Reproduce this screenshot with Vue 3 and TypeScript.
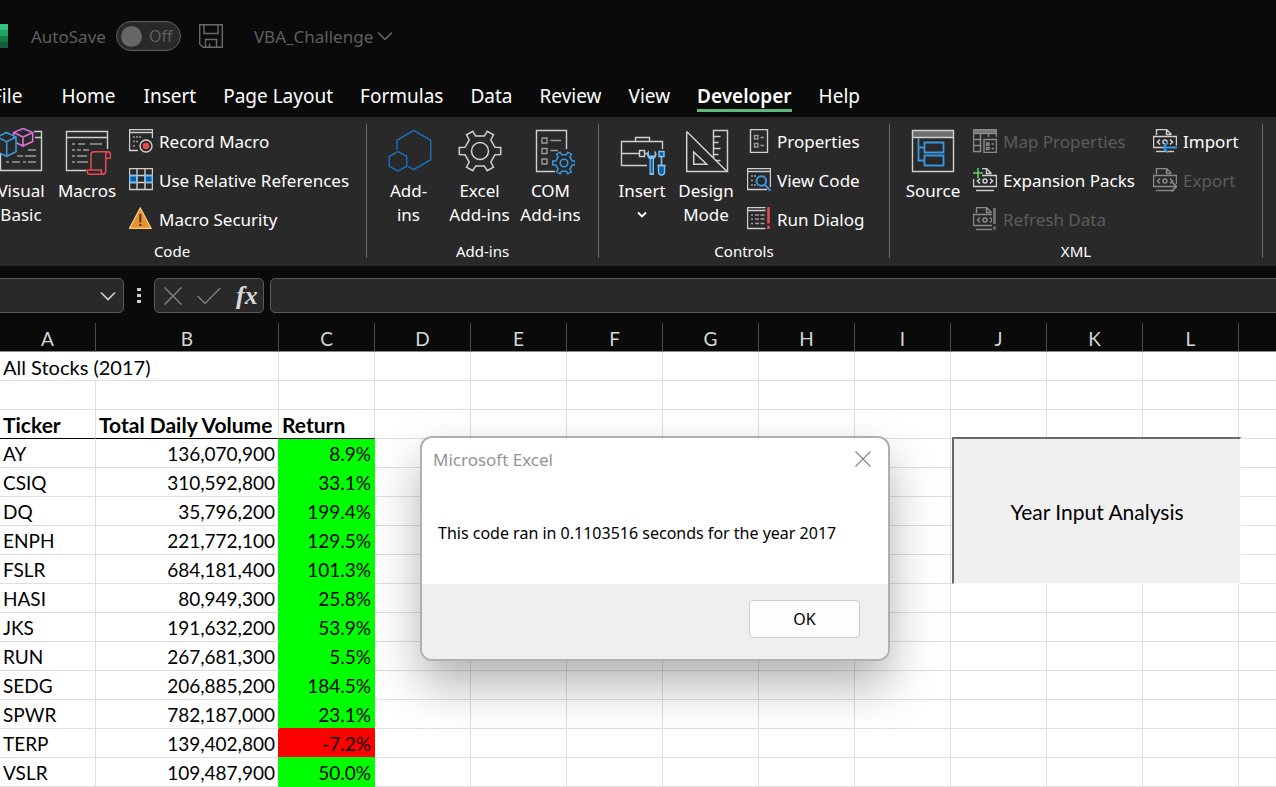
<script setup lang="ts">
import { h, ref } from 'vue'

interface Shape {
  d: string
  s?: string
  f?: string
  w?: number
}

interface Command {
  label: string
  icon: string
  disabled?: boolean
}

interface BigCommand {
  lines: string[]
  icon: string
  menu?: boolean
}

interface Group {
  name: string
  key: string
  big: BigCommand[]
  small: Command[][]
}

const light = '#d0d0d0'
const mid = '#9a9a9a'
const dim = '#8a8a8a'
const blue = '#3a96dd'
const deep = '#0063b1'
const pale = '#83beec'
const red = '#e84a4f'

function gear(cx: number, cy: number, outer: number, root: number): string {
  const points: string[] = []
  const at = (deg: number, r: number) => {
    const a = (deg * Math.PI) / 180
    points.push(`${(cx + r * Math.cos(a)).toFixed(1)} ${(cy + r * Math.sin(a)).toFixed(1)}`)
  }
  for (let k = 0; k < 360; k += 60) {
    at(k - 14, root)
    at(k - 10, outer)
    at(k + 10, outer)
    at(k + 14, root)
  }
  return `M${points.join('L')}Z`
}

function circle(cx: number, cy: number, r: number): string {
  return `M${cx - r} ${cy}a${r} ${r} 0 1 0 ${2 * r} 0a${r} ${r} 0 1 0 ${-2 * r} 0`
}

function xmlPage(color: string): Shape[] {
  return [
    { d: 'M3.5 6V.5H13.5L18.5 5.5M13.5 .5V5.5H18.5', s: color },
    { d: 'M3.5 7.5H.5V18.5H4M.5 7.5H23.5V18.5H.5', s: color },
    { d: 'M7 10.5L4.5 13L7 15.5M17 10.5L19.5 13L17 15.5', s: color, w: 1.6 },
    { d: circle(12, 13, 2), s: color, w: 1.5 },
    { d: 'M3 22.5H21', s: color },
  ]
}

const icons: Record<string, Shape[]> = {
  visualBasic: [
    { d: 'M3.5 26V42.5H44.5V3.5H37M38 9.5H44.5', s: light },
    { d: 'M31 22H39M20 28H26M28 28H39M9 34H12M15 34H23M26 34H29M31 34H39', s: mid },
    { d: 'M26 .5L35.7 4.5V13.5L26 18L16.7 13.5V4.5ZM16.7 4.5L26 9L35.7 4.5M26 9V18', s: '#d66fd6', f: '#292929', w: 1.6 },
    { d: 'M9.7 4.5L19 9V23.7L9.7 28.3L.3 23.7V9ZM.3 9L9.7 13.7L19 9M9.7 13.7V28.3', s: blue, f: '#292929', w: 1.6 },
  ],
  macros: [
    { d: 'M23 42.5H3.5V3.5H44.5V21M3.5 9.5H44.5', s: light },
    { d: 'M9 16H12M15 16H22M27 16H39M9 22H12M14 22H18M20 22H26M9 28H12M14 28H24M9 34H12M14 34H25', s: mid },
    {
      d: 'M28 42V27Q28 23.7 31 23.7H45Q47.5 23.7 47.5 27V30.3H42.7M45 23.7Q42.7 24 42.7 27V43Q42.7 46.3 40 46.3H27Q24.3 46.3 24.3 44V42H38.3V44Q38.3 46.3 40.5 46.3',
      s: red,
      w: 1.5,
    },
  ],
  recordMacro: [
    { d: 'M9 21.5H.5V.5H23.5V9M.5 3.5H23.5', s: light },
    { d: 'M4 8H6M7 8H9M10 8H12M4 12.5H6M7 12.5H9M4 17H6', s: mid },
    { d: circle(17, 17, 6), s: light },
    { d: circle(17, 17, 3.3), f: red },
  ],
  relativeRefs: [
    { d: 'M.5 7.5H8V14.5H.5ZM16 7.5H23.5V14.5H16Z', f: deep },
    { d: 'M.5 .5H23.5V21.5H.5ZM.5 7.5H23.5M.5 14.5H23.5M8 .5V21.5M16 .5V21.5', s: light },
    { d: 'M.5 7.5H8V14.5H.5ZM16 7.5H23.5V14.5H16Z', s: pale },
  ],
  warning: [
    { d: 'M11.3 1L22 21.3H.6Z', f: '#e8912d', s: '#f7cf86', w: 1.3 },
    { d: 'M11.3 7V15.5M11.3 17V19', s: '#4a3a20', w: 2 },
  ],
  addins: [
    { d: 'M12 21.7V12.3L28.7 2.3L45.7 12.3V31.7L28.7 41.7L23.3 38.7', s: '#1a6dbd', w: 1.5 },
    { d: 'M13 23.7L21.7 28.3V38.3L13 43L4.3 38.3V28.3Z', s: '#1a6dbd', w: 1.5 },
  ],
  excelAddins: [
    { d: gear(24, 23, 21, 15.5), s: light, w: 1.5 },
    { d: circle(24, 23, 8.5), s: light, w: 1.5 },
  ],
  comAddins: [
    { d: 'M28 43.5H9.5V2.5H39.5V21', s: light },
    { d: 'M15 10H20V15H15ZM15 20.5H20V25.5H15ZM15 31H20V36H15ZM23.5 12.5H34M23.5 22.5H31', s: mid },
    { d: gear(37, 35, 11.5, 8.5), s: blue, w: 1.5 },
    { d: circle(37, 35, 3.8), s: blue, w: 1.5 },
  ],
  insert: [
    { d: 'M29 37.5H3.5V13.5H44.5V21M17.5 13V9.5H31.5V13M3.5 25.5H21.5M26.5 25.5H29', s: light },
    { d: 'M21.5 22.5H26.5V28.5H21.5Z', s: light },
    {
      d: 'M31 22.5C28.2 24 28 29 31.5 31V47H36V31C39.5 29 39.3 24 36.5 22.5V27.5H31Z',
      f: pale,
    },
    { d: 'M33.7 31V45', s: deep, w: 2 },
    { d: 'M41 23.5H46V28.5H41ZM40.5 37.5H46.5V44Q46.5 47 43.5 47Q40.5 47 40.5 44Z', s: pale, f: deep },
    { d: 'M43.5 29V37M39.5 37.5H47.5', s: pale, w: 1.6 },
  ],
  designMode: [
    { d: 'M4.7 3.5V43.5H45L4.7 3.5M11.7 24V36.3H24.7Z', s: light, w: 1.5 },
    { d: 'M31.5 30V2.5H45.5V43.5M31.5 8.5H38.5M31.5 14.5H36.5M31.5 20.5H38.5M31.5 26.5H36.5M34 32.5H38.5', s: light, w: 1.5 },
  ],
  properties: [
    { d: 'M3.5 .5H20.5V23.5H3.5Z', s: light },
    { d: 'M7.5 6.5H11V10H7.5ZM7.5 14.5H11V18H7.5ZM13.5 8.5H17M13.5 16.5H17', s: mid },
  ],
  viewCode: [
    { d: 'M20 21.5H.5V.5H23.5V19M.5 3.5H23.5', s: light },
    { d: 'M4 8H6M7 8H9M4 12.5H6M4 17H6M7 17H9', s: mid },
    { d: `${circle(14.3, 13, 4.8)}M18 17L23.5 22.7`, s: blue, w: 2 },
  ],
  runDialog: [
    { d: 'M18.5 21.5H.5V.5H18.5M.5 3.5H18.5', s: light },
    { d: 'M4 8H6M8 8H12M13.5 8H17.5M4 12H6M8 12H12M13.5 12H17.5M4 16.5H6M8 16.5H12M13.5 16.5H17.5', s: mid },
    { d: 'M21.5 0V16.5M21.5 18.5V22', s: red, w: 2.6 },
  ],
  source: [
    { d: 'M3.5 2.5H44.5V9.5H3.5Z', f: '#6e6e6e' },
    { d: 'M3.5 2.5H44.5V43.5H3.5ZM3.5 9.5H44.5', s: light },
    { d: 'M9.5 10V32.5H15.5M9.5 19.5H15.5M15.5 14.5H34.5V24.5H15.5ZM15.5 27.5H34.5V37.5H15.5Z', s: blue, w: 1.8 },
  ],
  mapProperties: [
    { d: 'M0 0H24V4.5H0Z', f: '#777777' },
    { d: 'M.5 .5H23.5V8M.5 4.5H23.5M.5 .5V22.5H8.5M.5 10.5H8.5M.5 16.5H8.5M7.5 4.5V22.5M15.5 4.5V8', s: dim },
    { d: 'M11 10.5H23.5V23.5H11ZM13.5 14H16V16H13.5ZM13.5 18.5H16V20.5H13.5ZM18.5 15H21M18.5 19.5H21', s: dim },
  ],
  expansionPacks: [
    { d: 'M9 .5H13.5L18.5 5.5M13.5 .5V5.5H18.5M.5 11V18.5H23.5V7.5H9', s: light },
    { d: 'M7 10.5L4.5 13L7 15.5M17 10.5L19.5 13L17 15.5', s: light, w: 1.6 },
    { d: circle(12, 13, 2), s: light, w: 1.5 },
    { d: 'M3 22.5H21', s: light },
    { d: 'M5 0V10M0 5H10', s: '#5fd068', w: 1.6 },
  ],
  refreshData: [
    ...xmlPage(dim),
    { d: 'M21.5 0V23', s: '#292929', w: 5 },
    { d: 'M21.5 1V17M21.5 19.5V22.5', s: '#777777', w: 2.6 },
  ],
  importXml: [
    ...xmlPage(light),
    { d: 'M11 18.5L15 14.5M12 18.5H24', s: '#292929', w: 4 },
    { d: 'M24 18.5H10M15 13.5L10 18.5L15 23.5', s: blue, w: 1.8 },
  ],
  exportXml: [
    ...xmlPage(dim),
    { d: 'M10 18.5H24', s: '#292929', w: 5 },
    { d: 'M9 18.5H23M18.5 13.5L23.5 18.5L18.5 23.5', s: dim, w: 1.6 },
  ],
}

const Glyph = (props: { name: string; size: number }) =>
  h(
    'svg',
    { width: props.size, height: props.size, viewBox: `0 0 ${props.size} ${props.size}`, 'aria-hidden': 'true' },
    icons[props.name].map((p) =>
      h('path', { d: p.d, fill: p.f ?? 'none', stroke: p.s ?? 'none', 'stroke-width': p.w ?? 1.4 }),
    ),
  )

const tabs = ['File', 'Home', 'Insert', 'Page Layout', 'Formulas', 'Data', 'Review', 'View', 'Developer', 'Help']
const activeTab = ref('Developer')
const autoSave = ref(false)
const dialogOpen = ref(true)

const groups: Group[] = [
  {
    name: 'Code',
    key: 'code',
    big: [
      { lines: ['Visual', 'Basic'], icon: 'visualBasic' },
      { lines: ['Macros'], icon: 'macros' },
    ],
    small: [
      [
        { label: 'Record Macro', icon: 'recordMacro' },
        { label: 'Use Relative References', icon: 'relativeRefs' },
        { label: 'Macro Security', icon: 'warning' },
      ],
    ],
  },
  {
    name: 'Add-ins',
    key: 'addins',
    big: [
      { lines: ['Add-', 'ins'], icon: 'addins' },
      { lines: ['Excel', 'Add-ins'], icon: 'excelAddins' },
      { lines: ['COM', 'Add-ins'], icon: 'comAddins' },
    ],
    small: [],
  },
  {
    name: 'Controls',
    key: 'controls',
    big: [
      { lines: ['Insert'], icon: 'insert', menu: true },
      { lines: ['Design', 'Mode'], icon: 'designMode' },
    ],
    small: [
      [
        { label: 'Properties', icon: 'properties' },
        { label: 'View Code', icon: 'viewCode' },
        { label: 'Run Dialog', icon: 'runDialog' },
      ],
    ],
  },
  {
    name: 'XML',
    key: 'xml',
    big: [{ lines: ['Source'], icon: 'source' }],
    small: [
      [
        { label: 'Map Properties', icon: 'mapProperties', disabled: true },
        { label: 'Expansion Packs', icon: 'expansionPacks' },
        { label: 'Refresh Data', icon: 'refreshData', disabled: true },
      ],
      [
        { label: 'Import', icon: 'importXml' },
        { label: 'Export', icon: 'exportXml', disabled: true },
      ],
    ],
  },
]

const columns = ['A', 'B', 'C', 'D', 'E', 'F', 'G', 'H', 'I', 'J', 'K', 'L']
const stocks: [string, string, string][] = [
  ['AY', '136,070,900', '8.9%'],
  ['CSIQ', '310,592,800', '33.1%'],
  ['DQ', '35,796,200', '199.4%'],
  ['ENPH', '221,772,100', '129.5%'],
  ['FSLR', '684,181,400', '101.3%'],
  ['HASI', '80,949,300', '25.8%'],
  ['JKS', '191,632,200', '53.9%'],
  ['RUN', '267,681,300', '5.5%'],
  ['SEDG', '206,885,200', '184.5%'],
  ['SPWR', '782,187,000', '23.1%'],
  ['TERP', '139,402,800', '-7.2%'],
  ['VSLR', '109,487,900', '50.0%'],
]
const tone = (value: string) => (value.startsWith('-') ? 'loss' : 'gain')
</script>

<template>
  <div class="excel">
    <header class="titlebar">
      <svg class="logo" width="8" height="24" viewBox="0 0 8 24" aria-hidden="true">
        <path d="M0 0H8V6H0Z" fill="#33c481" />
        <path d="M0 6H8V12H0Z" fill="#21a366" />
        <path d="M0 12H8V18H0Z" fill="#107c41" />
        <path d="M0 18H8V24H0Z" fill="#185c37" />
      </svg>
      <label class="autosave">
        AutoSave
        <span class="switch">
          <input v-model="autoSave" type="checkbox" role="switch" />
          <span>{{ autoSave ? 'On' : 'Off' }}</span>
        </span>
      </label>
      <button class="plain save" type="button" aria-label="Save">
        <svg width="24" height="24" viewBox="0 0 24 24" aria-hidden="true">
          <path
            d="M.7 .7H23.3V23.3H4L.7 20ZM5 .7V9.5H19V.7M6.5 23.3V15.5H17.5V23.3M10.5 23V19.5"
            fill="none"
            stroke="#6a6a6a"
            stroke-width="1.4"
          />
        </svg>
      </button>
      <button class="plain filename" type="button">
        VBA_Challenge
        <svg width="16" height="10" viewBox="0 0 16 10" aria-hidden="true">
          <path d="M1 1.5L8 8.5L15 1.5" fill="none" stroke="#6a6a6a" stroke-width="1.5" />
        </svg>
      </button>
    </header>

    <nav class="tabs" aria-label="Ribbon tabs">
      <button
        v-for="tab in tabs"
        :key="tab"
        type="button"
        class="plain tab"
        :class="{ active: tab === activeTab }"
        @click="activeTab = tab"
      >
        {{ tab }}
      </button>
    </nav>

    <section class="ribbon" aria-label="Developer">
      <div v-for="group in groups" :key="group.key" class="group" :class="group.key">
        <div class="commands">
          <button v-for="cmd in group.big" :key="cmd.icon" type="button" class="plain big">
            <Glyph :name="cmd.icon" :size="48" />
            <span v-for="line in cmd.lines" :key="line">{{ line }}</span>
            <svg v-if="cmd.menu" class="caret" width="10" height="8" viewBox="0 0 10 8" aria-hidden="true">
              <path d="M1 1.5L5 5.5L9 1.5" fill="none" stroke="#ffffff" stroke-width="1.8" />
            </svg>
          </button>
          <div v-for="(list, i) in group.small" :key="i" class="stack">
            <button
              v-for="cmd in list"
              :key="cmd.icon"
              type="button"
              class="plain small"
              :disabled="cmd.disabled"
            >
              <Glyph :name="cmd.icon" :size="24" />
              {{ cmd.label }}
            </button>
          </div>
        </div>
        <div class="caption">{{ group.name }}</div>
      </div>
    </section>

    <section class="formula-bar" aria-label="Formula bar">
      <div class="box name-box">
        <input type="text" aria-label="Name box" />
        <button class="plain" type="button" aria-label="Named ranges">
          <svg width="16" height="10" viewBox="0 0 16 10" aria-hidden="true">
            <path d="M1 1.5L8 8.5L15 1.5" fill="none" stroke="#d0d0d0" stroke-width="1.7" />
          </svg>
        </button>
      </div>
      <svg class="dots" width="4" height="16" viewBox="0 0 4 16" aria-hidden="true">
        <path d="M0 0H4V3H0ZM0 6H4V9H0ZM0 12H4V15H0Z" fill="#d0d0d0" />
      </svg>
      <div class="box actions">
        <button class="plain" type="button" aria-label="Cancel">
          <svg width="18" height="18" viewBox="0 0 18 18" aria-hidden="true">
            <path d="M.5 .5L17.5 17.5M17.5 .5L.5 17.5" fill="none" stroke="#7d7d7d" stroke-width="1.5" />
          </svg>
        </button>
        <button class="plain" type="button" aria-label="Enter">
          <svg width="24" height="18" viewBox="0 0 24 18" aria-hidden="true">
            <path d="M.7 9L8 16.5L23.3 1" fill="none" stroke="#7d7d7d" stroke-width="1.5" />
          </svg>
        </button>
        <button class="plain fx" type="button" aria-label="Insert function">fx</button>
      </div>
      <input class="box formula" type="text" aria-label="Formula" />
    </section>

    <main class="sheet">
      <table>
        <colgroup>
          <col v-for="c in columns" :key="c" :class="c === 'B' ? 'wide' : 'normal'" />
          <col />
        </colgroup>
        <thead>
          <tr>
            <th v-for="c in columns" :key="c" scope="col">{{ c }}</th>
            <th></th>
          </tr>
        </thead>
        <tbody>
          <tr class="title">
            <td colspan="2">All Stocks (2017)</td>
            <td v-for="n in 11" :key="n"></td>
          </tr>
          <tr>
            <td v-for="n in 13" :key="n"></td>
          </tr>
          <tr class="heading">
            <td>Ticker</td>
            <td>Total Daily Volume</td>
            <td>Return</td>
            <td v-for="n in 10" :key="n"></td>
          </tr>
          <tr v-for="[ticker, volume, change] in stocks" :key="ticker" :class="tone(change)">
            <td>{{ ticker }}</td>
            <td class="number volume">{{ volume }}</td>
            <td class="number change">{{ change }}</td>
            <td v-for="n in 10" :key="n"></td>
          </tr>
        </tbody>
      </table>

      <button class="macro-button" type="button" @click="dialogOpen = true">Year Input Analysis</button>

      <div v-if="dialogOpen" class="dialog" role="dialog" aria-labelledby="dialog-title">
        <div class="dialog-head">
          <span id="dialog-title">Microsoft Excel</span>
          <button class="plain" type="button" aria-label="Close" @click="dialogOpen = false">
            <svg width="16" height="16" viewBox="0 0 16 16" aria-hidden="true">
              <path d="M.5 .5L15.5 15.5M15.5 .5L.5 15.5" fill="none" stroke="#8c8c8c" stroke-width="1.3" />
            </svg>
          </button>
        </div>
        <p>This code ran in 0.1103516 seconds for the year 2017</p>
        <div class="dialog-foot">
          <button class="ok" type="button" @click="dialogOpen = false">OK</button>
        </div>
      </div>
    </main>
  </div>
</template>

<style>
body {
  margin: 0;
  overflow: hidden;
  background: #ffffff;
}
</style>

<style scoped>
.excel {
  overflow: hidden;
  background: #0a0a0a;
  color: #ffffff;
  font-family: 'Noto Sans', 'Open Sans', sans-serif;
  font-size: 17px;
}

.excel * {
  box-sizing: border-box;
}

svg {
  display: block;
  flex: none;
}

.plain {
  padding: 0;
  border: 0;
  background: none;
  color: inherit;
  font: inherit;
  white-space: nowrap;
}

.titlebar {
  display: flex;
  align-items: center;
  height: 72px;
  color: #5f5f5f;
}

.logo {
  margin-right: 23px;
}

.autosave,
.switch,
.filename {
  display: flex;
  align-items: center;
}

.autosave {
  gap: 10px;
}

.switch {
  gap: 7px;
  width: 65px;
  height: 30px;
  padding-left: 4px;
  border: 1px solid #5f5f5f;
  border-radius: 15px;
  background: #292929;
  font-size: 16px;
}

.switch input {
  appearance: none;
  width: 21px;
  height: 21px;
  margin: 0;
  border-radius: 50%;
  background: #666666;
}

.save {
  margin: 0 31px 0 18px;
}

.filename {
  gap: 4px;
}

.tabs {
  display: flex;
  align-items: flex-start;
  gap: 28px;
  height: 45px;
  margin-left: -8px;
  font-size: 19px;
  line-height: 24px;
}

.tab {
  padding: 12px 0 1px;
  border-bottom: 3px solid transparent;
}

.tab:first-child {
  margin-right: 11px;
}

.tab.active {
  border-color: #5fb878;
  font-weight: 600;
}

.tab:nth-child(n + 4) {
  margin-left: -1px;
}

.ribbon {
  display: flex;
  height: 149px;
  margin-left: -22px;
  padding-top: 7px;
  background: #292929;
}

.group {
  flex: none;
  height: 134px;
  border-right: 1px solid #666666;
}

.code {
  width: 389px;
}

.addins {
  width: 232px;
}

.controls {
  width: 291px;
}

.xml {
  width: 373px;
}

.commands {
  display: flex;
  height: 120px;
  padding-left: 10px;
}

.addins .commands {
  padding-left: 6px;
}

.controls .commands {
  padding-left: 11px;
}

.big {
  display: flex;
  flex: none;
  flex-direction: column;
  align-items: center;
  width: 66px;
  padding-top: 4px;
  line-height: 24px;
}

.addins .big {
  width: 71px;
}

.controls .big {
  width: 64px;
}

.big svg {
  margin-bottom: 3px;
}

.big .caret {
  margin-top: 8px;
}

.stack {
  display: flex;
  flex: none;
  flex-direction: column;
  align-items: flex-start;
  gap: 15px;
  padding: 5px 0 0 9px;
}

.xml .stack {
  width: 180px;
  padding-left: 7px;
}

.small {
  display: flex;
  align-items: center;
  gap: 6px;
  height: 24px;
}

.small:disabled {
  color: #5c5c5c;
}

.caption {
  font-size: 15px;
  line-height: 14px;
  text-align: center;
}

.formula-bar {
  display: flex;
  align-items: center;
  height: 57px;
  margin-left: -10px;
  padding-top: 2px;
}

.box {
  display: flex;
  align-items: center;
  height: 35px;
  border: 1px solid #5a5a5a;
  border-radius: 5px;
  background: #292929;
  color: #ffffff;
}

.name-box {
  width: 134px;
  padding-right: 7px;
}

.name-box input {
  flex: 1;
  width: 0;
  border: 0;
  background: none;
  color: inherit;
}

.dots {
  margin: 0 13px;
}

.actions {
  gap: 15px;
  width: 110px;
  padding-left: 9px;
}

.fx {
  color: #d8d8d8;
  font-family: 'Liberation Serif', serif;
  font-size: 26px;
  font-style: italic;
  font-weight: 700;
  line-height: 30px;
}

.formula {
  flex: 1;
  margin: 0 -8px 0 6px;
}

.sheet {
  position: relative;
  background: #ffffff;
  color: #000000;
  font-family: Lato, 'Open Sans', sans-serif;
  font-size: 19px;
}

table {
  width: 100%;
  border-spacing: 0;
  table-layout: fixed;
}

.normal {
  width: 96px;
}

.wide {
  width: 183px;
}

th,
td {
  height: 29px;
  padding: 2px 3px 0;
  border-right: 1px solid #dedede;
  border-bottom: 1px solid #dedede;
  line-height: 26px;
  white-space: nowrap;
}

th {
  padding-top: 3px;
  border-right-color: #4a4a4a;
  border-bottom-color: #8a8a8a;
  background: #0a0a0a;
  color: #d6d6d6;
  font-weight: 400;
  line-height: 25px;
}

th:last-child,
td:last-child {
  border-right: 0;
}

.title td {
  font-size: 20px;
}

.heading td {
  font-size: 21px;
  font-weight: 700;
}

.heading td:nth-child(-n + 3) {
  border-bottom-color: #000000;
}

.number {
  text-align: right;
}

.gain .change {
  border-color: #00ff00;
  background: #00ff00;
}

.gain .volume {
  border-right-color: #00ff00;
}

.loss .change {
  border-color: #ff0000;
  border-bottom-color: #00ff00;
  background: #ff0000;
}

.loss .volume {
  border-right-color: #ff0000;
}

.gain:has(+ .loss) .change {
  border-bottom-color: #ff0000;
}

.macro-button {
  position: absolute;
  top: 114px;
  left: 952px;
  width: 289px;
  height: 147px;
  border: 1px solid #ffffff;
  border-top: 2px solid #696969;
  border-left: 2px solid #696969;
  background: #f0f0f0;
  color: #000000;
  font: inherit;
  font-size: 21px;
}

.dialog {
  position: absolute;
  top: 113px;
  left: 420px;
  width: 470px;
  border: 2px solid #b0b0b0;
  border-radius: 12px;
  background: #ffffff;
  box-shadow: 0 24px 48px rgba(0, 0, 0, 0.3);
  font-family: 'Noto Sans', 'Open Sans', sans-serif;
  font-size: 16px;
}

.dialog-head {
  display: flex;
  align-items: center;
  justify-content: space-between;
  height: 42px;
  padding: 0 17px 0 11px;
  color: #949494;
  font-size: 17px;
}

.dialog p {
  margin: 0;
  padding: 41px 16px 39px;
  line-height: 24px;
  white-space: nowrap;
}

.dialog-foot {
  display: flex;
  justify-content: flex-end;
  padding: 16px 28px 21px;
  border-radius: 0 0 10px 10px;
  background: #efefef;
}

.ok {
  width: 111px;
  height: 38px;
  border: 1px solid #cccccc;
  border-radius: 4px;
  background: #fdfdfd;
  color: #000000;
  font: inherit;
}
</style>
